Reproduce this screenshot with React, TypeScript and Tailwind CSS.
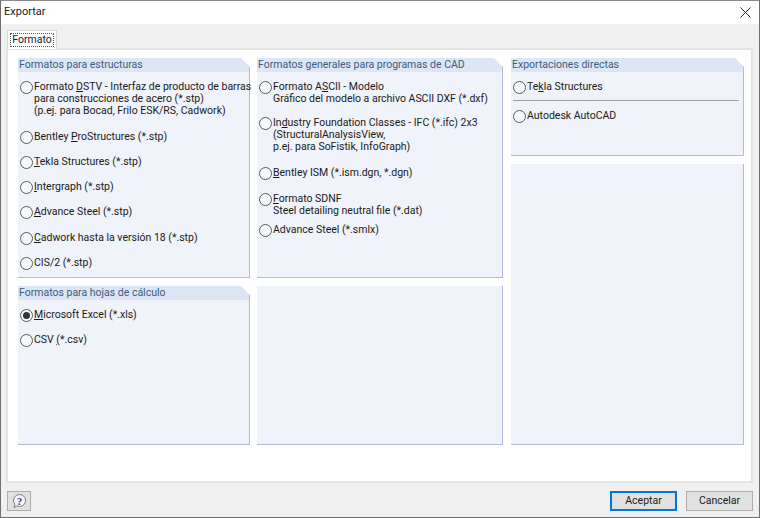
import React from "react";

function Radio({checked = false}: {checked?: boolean}) {
  return (
    <span className="w-[13px] h-[13px] shrink-0 rounded-full border border-[#5a5a5a] bg-[#f7f9fc] flex items-center justify-center">
      {checked && <span className="w-[7px] h-[7px] rounded-full bg-[#333333]" />}
    </span>
  );
}

function Option({checked, children, className = ""}: {checked?: boolean; children: React.ReactNode; className?: string}) {
  return (
    <div className={"flex items-start gap-[1px] text-[10.5px] leading-[12px] text-[#1a1a1a] whitespace-nowrap " + className}>
      <Radio checked={checked} />
      <div>{children}</div>
    </div>
  );
}

function Panel({title, className = "", children}: {title?: string; className?: string; children?: React.ReactNode}) {
  return (
    <div className={"relative bg-[#f0f3f9] border-r border-b border-[#b5b5e8] " + className}>
      {title && (
        <div className="relative h-[14px] bg-[#dce6f4] pl-[1px] text-[10.5px] leading-[14px] text-[#3d5c80]">
          {title}
          <span className="absolute top-0 right-[-1px] w-0 h-0 border-t-[9px] border-l-[9px] border-t-white border-l-transparent" />
        </div>
      )}
      {children}
    </div>
  );
}

export default function App() {
  return (
    <div className="w-[760px] h-[518px] bg-[#f0f0f0] border border-[#6f6f6f] border-t-[#8a8a8a] flex flex-col font-['Roboto',sans-serif] overflow-hidden">
      <div className="h-[23px] bg-white flex items-center justify-between pl-[3px] pr-[8px] text-[11px] text-[#1a1a1a]">
        <span>Exportar</span>
        <svg width="11" height="11" viewBox="0 0 11 11" className="stroke-[#222222]">
          <path d="M0.5 0.5L10.5 10.5M10.5 0.5L0.5 10.5" strokeWidth="1" fill="none" />
        </svg>
      </div>
      <div className="h-[6px]" />
      <div className="h-[18px] flex pl-[6px]">
        <div className="w-[50px] h-[19px] bg-white border border-b-0 border-[#d9d9d9] relative z-10 p-[2px]">
          <div className="h-[14px] border border-dotted border-[#555555] text-[10.5px] leading-[12px] text-center text-[#1a1a1a]">Formato</div>
        </div>
      </div>
      <div className="ml-[5px] w-[747px] h-[435px] bg-white border-2 border-[#e3e3e3] pt-[8px] pl-[10px] flex">
        <div className="w-[232px] mr-[7px] flex flex-col gap-[8px]">
          <Panel title="Formatos para estructuras" className="h-[220px]">
            <div className="pt-[9px] pl-[2px] flex flex-col gap-[12px]">
              <Option className="mb-[2px]"><div>Formato <u>D</u>STV - Interfaz de producto de barras</div><div>para construcciones de acero (*.stp)</div><div>(p.ej. para Bocad, Frilo ESK/RS, Cadwork)</div></Option>
              <Option>Bentley <u>P</u>roStructures (*.stp)</Option>
              <Option><u>T</u>ekla Structures (*.stp)</Option>
              <Option><u>I</u>ntergraph (*.stp)</Option>
              <Option><u>A</u>dvance Steel (*.stp)</Option>
              <Option className="mt-[1px]"><u>C</u>adwork hasta la versión 18 (*.stp)</Option>
              <Option>CIS/2 (*.stp)</Option>
            </div>
          </Panel>
          <Panel title="Formatos para hojas de cálculo" className="h-[159px]">
            <div className="pt-[9px] pl-[2px] flex flex-col gap-[12px]">
              <Option checked><u>M</u>icrosoft Excel (*.xls)</Option>
              <Option>CSV <u>(</u>*.csv)</Option>
            </div>
          </Panel>
        </div>
        <div className="w-[246px] mr-[8px] flex flex-col gap-[8px]">
          <Panel title="Formatos generales para programas de CAD" className="h-[220px]">
            <div className="pt-[9px] pl-[2px] flex flex-col">
              <Option className="mb-[12px]"><div>Formato A<u>S</u>CII - Modelo</div><div>Gráfico del modelo a archivo ASCII DXF (*.dxf)</div></Option>
              <Option className="mb-[14px]"><div>In<u>d</u>ustry Foundation Classes - IFC (*.ifc) 2x3</div><div>(StructuralAnalysisView,</div><div>p.ej. para SoFistik, InfoGraph)</div></Option>
              <Option className="mb-[13px]"><u>B</u>entley ISM (*.ism.dgn, *.dgn)</Option>
              <Option className="mb-[7px]"><div><u>F</u>ormato SDNF</div><div>Steel detailing neutral file (*.dat)</div></Option>
              <Option>Advance Steel (*.smlx)</Option>
            </div>
          </Panel>
          <Panel className="h-[159px]" />
        </div>
        <div className="w-[233px] flex flex-col gap-[8px]">
          <Panel title="Exportaciones directas" className="h-[98px]">
            <div className="pt-[9px] pl-[2px]">
              <Option>Te<u>k</u>la Structures</Option>
              <div className="h-[1px] bg-[#a0a0a0] mt-[6px] mb-[9px] mr-[4px]" />
              <Option>Autodesk AutoCAD</Option>
            </div>
          </Panel>
          <Panel className="h-[281px]" />
        </div>
      </div>
      <div className="flex-1 flex items-start justify-between pt-[8px] pl-[6px] pr-[6px]">
        <button className="w-[24px] h-[20px] bg-[#e1e1e1] border border-[#adadad] flex items-center justify-center">
          <svg width="16" height="16" viewBox="0 0 16 16">
            <path d="M8.5 1.5a6 6 0 1 1-2.5 11.4L3 14.5l.8-3.2A6 6 0 0 1 8.5 1.5z" fill="#f4f4f4" stroke="#7d7d7d" />
            <text x="8.5" y="11.5" textAnchor="middle" fontSize="11" fontWeight="bold" fill="#28459a" fontFamily="Liberation Serif, serif">?</text>
          </svg>
        </button>
        <div className="flex gap-[9px]">
          <button className="w-[67px] h-[20px] bg-[#e1e1e1] border-2 border-[#0078d7] text-[10.5px] leading-[14px] text-[#1a1a1a]">Aceptar</button>
          <button className="w-[67px] h-[20px] bg-[#e1e1e1] border border-[#adadad] text-[10.5px] leading-[14px] text-[#1a1a1a]">Cancelar</button>
        </div>
      </div>
    </div>
  );
}
